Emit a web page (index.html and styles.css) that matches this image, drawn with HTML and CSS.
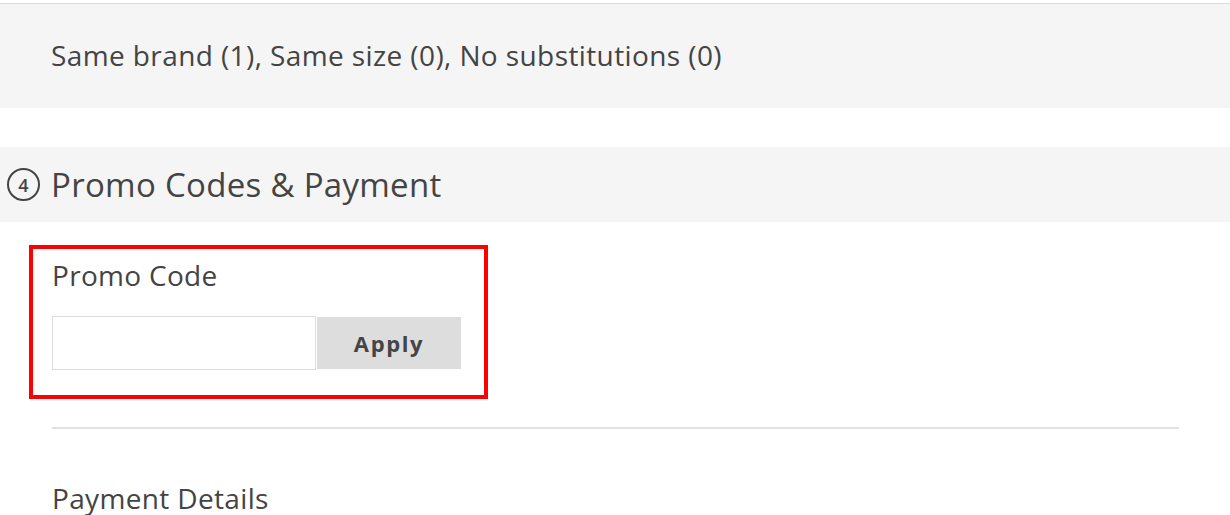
FILE: index.html
```html
<!DOCTYPE html>
<html lang="en">
<head>
    <meta charset="UTF-8">
    <meta name="viewport" content="width=device-width, initial-scale=1.0">
    <title>Checkout</title>
    <link rel="stylesheet" href="styles.css">
</head>
<body>

	<div class="prefs">
		<p>Same brand (1), Same size (0), No substitutions (0)</p>
	</div>

	<div class="step-head">
		<span class="step-num">4</span>
		<h2>Promo Codes &amp; Payment</h2>
	</div>

	<div class="step-body">
		<form class="promo" autocomplete="off">
			<label for="promo">Promo Code</label>
			<div class="promo-row">
				<input id="promo" type="text"/>
				<button type="button">Apply</button>
			</div>
		</form>

		<hr class="divider">

		<h3 class="pay-title">Payment Details</h3>
	</div>

</body>
</html>
```

FILE: styles.css
```css
* {
	box-sizing: border-box;
	font-family: "Open Sans", Lato, Arial, sans-serif;
}
body {
	margin: 0;
	color: #444;
	background: #fff;
}
.prefs {
	margin-top: 3px;
	border-top: 1px solid #ddd;
	background-color: #f5f5f5;
	height: 105px;
	display: flex;
	align-items: center;
	padding-left: 51px;
	padding-bottom: 2px;
}
.prefs p {
	margin: 0;
	font-size: 28px;
	letter-spacing: 0.4px;
}
.step-head {
	margin-top: 39px;
	background-color: #f5f5f5;
	height: 75px;
	display: flex;
	align-items: center;
	padding-left: 7px;
}
.step-num {
	width: 33px;
	height: 33px;
	border: 2px solid #444;
	border-radius: 50%;
	display: flex;
	align-items: center;
	justify-content: center;
	font-size: 18px;
	font-weight: 600;
	margin-right: 11px;
}
.step-head h2 {
	margin: 0;
	font-size: 33px;
	font-weight: normal;
	letter-spacing: 0.3px;
}
.promo {
	margin: 23px 0 0 29px;
	width: 459px;
	height: 154px;
	border: 4px solid #ff0000;
	padding: 7px 0 0 19px;
}
.promo label {
	display: block;
	font-size: 28px;
	letter-spacing: 0.3px;
	height: 60px;
}
.promo-row {
	display: flex;
	align-items: center;
}
.promo-row input {
	width: 264px;
	height: 54px;
	border: 1px solid #ddd;
	margin: 0;
	padding: 0 12px;
}
.promo-row button {
	width: 144px;
	height: 52px;
	margin-left: 1px;
	border: none;
	background-color: #ddd;
	color: #444;
	font-size: 22px;
	font-weight: bold;
	letter-spacing: 1.6px;
	cursor: pointer;
}
.divider {
	margin: 28px 0 0 52px;
	width: 1127px;
	border: none;
	border-top: 2px solid #e2e2e2;
}
.pay-title {
	margin: 50px 0 0 52px;
	font-size: 28px;
	font-weight: normal;
	letter-spacing: 0.35px;
}
```
